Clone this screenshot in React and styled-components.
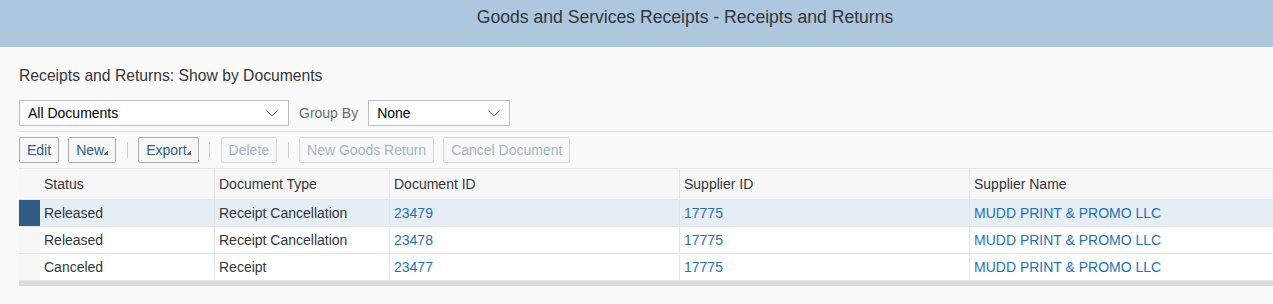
import React from "react";
import styled, { createGlobalStyle } from "styled-components";

const GlobalStyle = createGlobalStyle`
  html, body { margin: 0; padding: 0; background: #fafafa; }
  body { font-family: "Liberation Sans", Arial, sans-serif; color: #32363a; }
  * { box-sizing: border-box; }
`;

const ShellBar = styled.header`
  height: 47px;
  background: #acc7de;
  padding-left: 97px;
  display: flex;
  justify-content: center;
`;

const ShellTitle = styled.h1`
  margin: 0;
  font-size: 17.6px;
  font-weight: normal;
  line-height: 34px;
  color: #32363a;
`;

const Content = styled.main`
  padding-left: 19px;
`;

const PageTitle = styled.h2`
  margin: 19px 0 0;
  font-size: 15.7px;
  font-weight: normal;
  line-height: 20px;
  color: #32363a;
`;

const FilterBar = styled.div`
  display: flex;
  align-items: center;
  gap: 10px;
  margin-top: 14px;
  height: 26px;
`;

const Select = styled.div`
  width: ${(p) => p.$width}px;
  height: 26px;
  background: #fff;
  border: 1px solid #bfbfbf;
  display: flex;
  align-items: center;
  justify-content: space-between;
  padding: 0 ${(p) => p.$chevronPad}px 0 8px;
  font-size: 14px;
  color: #000;
`;

const Label = styled.span`
  font-size: 14px;
  color: #666a6e;
`;

const Divider = styled.div`
  height: 1px;
  background: #e0e0e0;
  margin-top: 5px;
`;

const Toolbar = styled.div`
  display: flex;
  align-items: center;
  gap: 9px;
  margin-top: 5px;
  height: 26px;
`;

const Button = styled.button`
  height: 26px;
  padding: 0 7px;
  border: 1px solid #ababab;
  border-radius: 2px;
  background: #f7f7f7;
  color: #346187;
  font-family: inherit;
  font-size: 14px;
  display: flex;
  align-items: center;
  opacity: ${(p) => (p.disabled ? 0.45 : 1)};
`;

const MenuMark = styled.span`
  width: 4px;
  height: 4px;
  align-self: flex-end;
  margin-bottom: 7px;
  background: linear-gradient(to bottom right, transparent 50%, #6a6d70 50%);
`;

const Sep = styled.span`
  width: 1px;
  height: 16px;
  margin: 0 1.5px;
  background: #cfcfcf;
`;

const Table = styled.div`
  margin-top: 5px;
  border-top: 1px solid #e5e5e5;
`;

const Row = styled.div`
  display: grid;
  grid-template-columns: 21px 175px 175px 290px 290px 1fr;
  height: ${(p) => (p.$header ? 31 : 27)}px;
  border-bottom: 1px solid #e5e5e5;
  background: ${(p) => (p.$header ? "#f7f7f7" : p.$selected ? "#e6eef6" : "#fff")};
`;

const Selector = styled.div`
  background: ${(p) => (p.$selected ? "#305d86" : "#f7f7f7")};
`;

const Cell = styled.div`
  display: flex;
  align-items: center;
  padding: 0 4px;
  font-size: 14px;
  white-space: nowrap;
  overflow: hidden;
  color: ${(p) => (p.$link ? "#1f72b8" : "#32363a")};
  border-right: ${(p) => (p.$last ? "none" : "1px solid #e5e5e5")};
`;

const ScrollTrack = styled.div`
  height: 5px;
  background: #dcdcdc;
`;

const Chevron = () => (
  <svg width="12" height="7" viewBox="0 0 12 7" fill="none">
    <path d="M0.5 0.5 L6 6 L11.5 0.5" stroke="#6a6d70" strokeWidth="1" />
  </svg>
);

const rows = [
  { status: "Released", type: "Receipt Cancellation", id: "23479", selected: true },
  { status: "Released", type: "Receipt Cancellation", id: "23478" },
  { status: "Canceled", type: "Receipt", id: "23477" },
];

export default function App() {
  return (
    <>
      <GlobalStyle />
      <ShellBar>
        <ShellTitle>Goods and Services Receipts - Receipts and Returns</ShellTitle>
      </ShellBar>
      <Content>
        <PageTitle>Receipts and Returns: Show by Documents</PageTitle>
        <FilterBar>
          <Select $width={270} $chevronPad={10}>
            <span>All Documents</span>
            <Chevron />
          </Select>
          <Label>Group By</Label>
          <Select $width={142} $chevronPad={9}>
            <span>None</span>
            <Chevron />
          </Select>
        </FilterBar>
        <Divider />
        <Toolbar>
          <Button>Edit</Button>
          <Button>
            New<MenuMark />
          </Button>
          <Sep />
          <Button>
            Export<MenuMark />
          </Button>
          <Sep />
          <Button disabled>Delete</Button>
          <Sep />
          <Button disabled>New Goods Return</Button>
          <Button disabled>Cancel Document</Button>
        </Toolbar>
        <Table>
          <Row $header>
            <Selector />
            <Cell>Status</Cell>
            <Cell>Document Type</Cell>
            <Cell>Document ID</Cell>
            <Cell>Supplier ID</Cell>
            <Cell $last>Supplier Name</Cell>
          </Row>
          {rows.map((r) => (
            <Row key={r.id} $selected={r.selected}>
              <Selector $selected={r.selected} />
              <Cell>{r.status}</Cell>
              <Cell>{r.type}</Cell>
              <Cell $link>{r.id}</Cell>
              <Cell $link>17775</Cell>
              <Cell $link $last>MUDD PRINT &amp; PROMO LLC</Cell>
            </Row>
          ))}
          <ScrollTrack />
        </Table>
      </Content>
    </>
  );
}
